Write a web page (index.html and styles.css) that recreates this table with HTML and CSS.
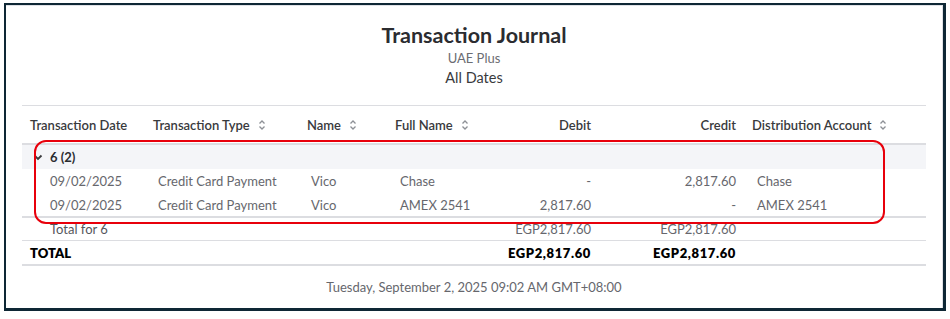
FILE: index.html
```html
<!DOCTYPE html>
<html>
<head>
<meta charset="utf-8">
<link rel="stylesheet" href="styles.css">
</head>
<body>
<div class="frame">
  <div class="report">
    <header class="head">
      <h1 class="title">Transaction Journal</h1>
      <div class="company">UAE Plus</div>
      <div class="period">All Dates</div>
    </header>

    <div class="table">
      <div class="row hdr">
        <div class="c c1">Transaction Date</div>
        <div class="c c2">Transaction Type <svg class="sort" viewBox="0 0 8 12"><path d="M1.5 4.5L4 2l2.5 2.5M1.5 7.5L4 10l2.5-2.5"/></svg></div>
        <div class="c c3">Name <svg class="sort" viewBox="0 0 8 12"><path d="M1.5 4.5L4 2l2.5 2.5M1.5 7.5L4 10l2.5-2.5"/></svg></div>
        <div class="c c4">Full Name <svg class="sort" viewBox="0 0 8 12"><path d="M1.5 4.5L4 2l2.5 2.5M1.5 7.5L4 10l2.5-2.5"/></svg></div>
        <div class="c c5 num">Debit</div>
        <div class="c c6 num">Credit</div>
        <div class="c c7">Distribution Account <svg class="sort" viewBox="0 0 8 12"><path d="M1.5 4.5L4 2l2.5 2.5M1.5 7.5L4 10l2.5-2.5"/></svg></div>
      </div>

      <div class="row group">
        <div class="grp"><svg class="chev" viewBox="0 0 10 7"><path d="M1.5 1.5L5 5l3.5-3.5"/></svg><span>6 (2)</span></div>
      </div>

      <div class="row data">
        <div class="c c1">09/02/2025</div>
        <div class="c c2">Credit Card Payment</div>
        <div class="c c3">Vico</div>
        <div class="c c4">Chase</div>
        <div class="c c5 num">-</div>
        <div class="c c6 num">2,817.60</div>
        <div class="c c7">Chase</div>
      </div>
      <div class="row data last">
        <div class="c c1">09/02/2025</div>
        <div class="c c2">Credit Card Payment</div>
        <div class="c c3">Vico</div>
        <div class="c c4">AMEX 2541</div>
        <div class="c c5 num">2,817.60</div>
        <div class="c c6 num">-</div>
        <div class="c c7">AMEX 2541</div>
      </div>

      <div class="row subtotal">
        <div class="c c1">Total for 6</div>
        <div class="c c2"></div>
        <div class="c c3"></div>
        <div class="c c4"></div>
        <div class="c c5 num">EGP2,817.60</div>
        <div class="c c6 num">EGP2,817.60</div>
        <div class="c c7"></div>
      </div>
      <div class="row total">
        <div class="c c1">TOTAL</div>
        <div class="c c2"></div>
        <div class="c c3"></div>
        <div class="c c4"></div>
        <div class="c c5 num amt">EGP2,817.60</div>
        <div class="c c6 num amt">EGP2,817.60</div>
        <div class="c c7"></div>
      </div>
    </div>

    <div class="footer">Tuesday, September 2, 2025 09:02 AM GMT+08:00</div>
  </div>
  <div class="highlight"></div>
</div>
</body>
</html>
```

FILE: styles.css
```css
* { box-sizing: border-box; }
html, body { margin: 0; padding: 0; background: #ffffff; }
body {
  font-family: Lato, "Open Sans", sans-serif;
  color: #393a3d;
}
.frame {
  position: relative;
  margin: 3px 0 0 4px;
  width: 942px;
  height: 308px;
  border: 3px solid #0e2735;
  border-left-width: 2px;
  border-top-width: 2px;
}
.report {
  height: 100%;
  border-top: 1px solid #dfe1e6;
  border-right: 1px solid #dfe1e6;
  padding: 15px 16px 0 16px;
}
.head { text-align: center; }
.title {
  margin: 0;
  font-size: 21.5px;
  line-height: 28px;
  font-weight: 700;
  color: #2b2c30;
}
.company {
  margin-top: 1px;
  font-size: 13px;
  line-height: 16px;
  color: #6b6c72;
}
.period {
  margin-top: 3px;
  font-size: 14.5px;
  line-height: 18px;
  color: #393a3d;
}
.table {
  margin-top: 18px;
  border-top: 1px solid #dcdde1;
  border-bottom: 2px solid #dcdde1;
  font-size: 13px;
}
.row {
  display: grid;
  grid-template-columns: 128px 153px 88px 89px 117px 145px 184px;
  align-items: center;
}
.c { white-space: nowrap; display: flex; align-items: center; }
.num { justify-content: flex-end; padding-right: 6px; }
.sort {
  width: 8px;
  height: 12px;
  margin-left: 8px;
  fill: none;
  stroke: #8d9096;
  stroke-width: 1.3;
}
.hdr {
  height: 39px;
  border-bottom: 2px solid #dcdde1;
  font-weight: 600;
  color: #393a3d;
}
.hdr .c1 { padding-left: 8px; }
.hdr .c2 { padding-left: 3px; }
.hdr .c3 { padding-left: 4px; }
.hdr .c4 { padding-left: 4px; }
.hdr .c7 { padding-left: 10px; }
.group {
  display: block;
  height: 24px;
  background: #f4f5f8;
}
.grp {
  display: flex;
  align-items: center;
  height: 24px;
  padding-left: 11px;
  font-weight: 700;
  color: #2b2c30;
}
.chev {
  width: 10px;
  height: 7px;
  margin-right: 7px;
  fill: none;
  stroke: #393a3d;
  stroke-width: 1.8;
}
.data {
  height: 24px;
  color: #66676d;
}
.data.last { height: 25px; border-bottom: 2px solid #dcdde1; }
.data .c1 { padding-left: 28px; }
.data .c2 { padding-left: 8px; }
.data .c3 { padding-left: 8px; }
.data .c4 { padding-left: 9px; }
.data .c7 { padding-left: 15px; }
.subtotal {
  height: 23px;
  border-bottom: 1px solid #dcdde1;
  color: #66676d;
}
.subtotal .c1 { padding-left: 28px; color: #55565b; }
.total {
  height: 23px;
  font-weight: 800;
  color: #000000;
}
.total .c1 { padding-left: 8px; }
.total .amt { letter-spacing: 0.6px; }
.footer {
  margin-top: 13px;
  text-align: center;
  font-size: 13px;
  line-height: 16px;
  color: #66676d;
}
.highlight {
  position: absolute;
  left: 28px;
  top: 135px;
  width: 851px;
  height: 84px;
  border: 2px solid #e8000b;
  border-radius: 12px;
  pointer-events: none;
}
```
